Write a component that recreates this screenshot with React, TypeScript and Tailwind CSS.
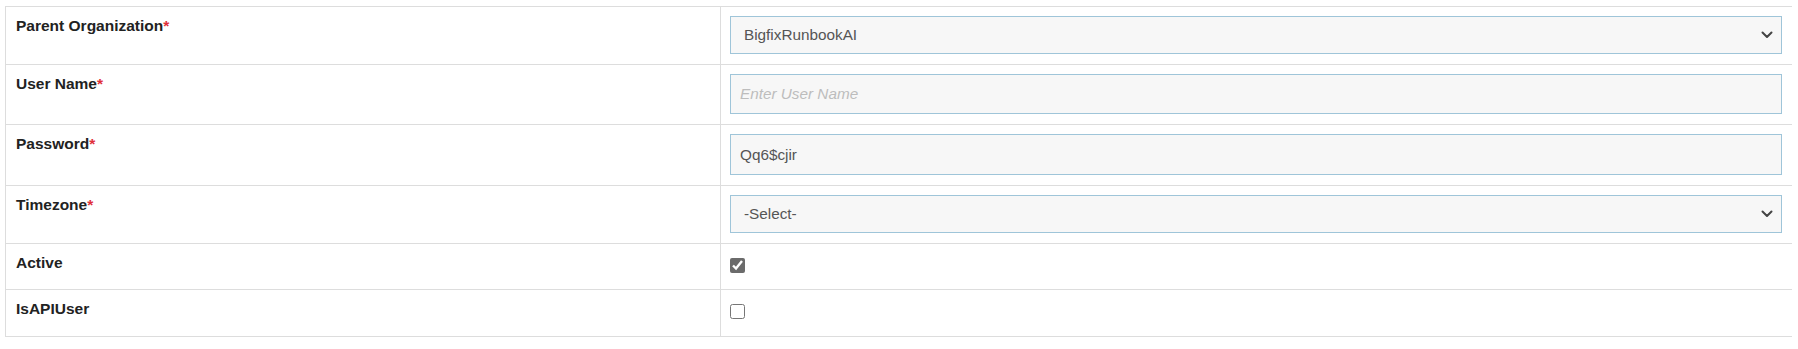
import React from 'react';

const font = { fontFamily: '"Liberation Sans", Arial, sans-serif' };

function Label({ text, required }: { text: string; required?: boolean }) {
  return (
    <div className="w-[715px] shrink-0 border-r border-[#dddddd] pl-[10px] pt-[10px] text-[15.5px] font-bold leading-[18px] text-[#222222]">
      {text}
      {required && <span className="text-[#e0303a]">*</span>}
    </div>
  );
}

function Chevron() {
  return (
    <svg className="pointer-events-none absolute right-[9px] top-1/2 -translate-y-1/2" width="12" height="8" viewBox="0 0 12 8" fill="none">
      <path d="M1.5 1.5 6 6l4.5-4.5" stroke="#444" strokeWidth="2" strokeLinecap="round" strokeLinejoin="round" />
    </svg>
  );
}

function SelectBox({ value }: { value: string }) {
  return (
    <div className="relative">
      <select
        defaultValue={value}
        className="block h-[38px] w-full appearance-none border border-[#9fc5d9] bg-[#f7f7f7] pl-[13px] pr-8 text-[15.3px] text-[#555555] outline-none"
        style={font}
      >
        <option>{value}</option>
      </select>
      <Chevron />
    </div>
  );
}

export default function App() {
  return (
    <div className="bg-white pl-[5px] pr-[6px] pt-[6px]" style={font}>
      <div className="border-l border-t border-[#dddddd]">
        <div className="flex border-b border-[#dddddd]">
          <Label text="Parent Organization" required />
          <div className="flex-1 pb-[10px] pl-[9px] pr-[10px] pt-[9px]">
            <SelectBox value="BigfixRunbookAI" />
          </div>
        </div>

        <div className="flex border-b border-[#dddddd]">
          <Label text="User Name" required />
          <div className="flex-1 pb-[10px] pl-[9px] pr-[10px] pt-[9px]">
            <input
              type="text"
              placeholder="Enter User Name"
              className="block h-[40px] w-full border border-[#9fc5d9] bg-[#f7f7f7] px-[9px] text-[15.3px] text-[#555555] outline-none placeholder:italic placeholder:text-[#bdbdbd]"
              style={font}
            />
          </div>
        </div>

        <div className="flex border-b border-[#dddddd]">
          <Label text="Password" required />
          <div className="flex-1 pb-[10px] pl-[9px] pr-[10px] pt-[9px]">
            <input
              type="text"
              defaultValue="Qq6$cjir"
              className="block h-[41px] w-full border border-[#9fc5d9] bg-[#f7f7f7] px-[9px] text-[15.3px] text-[#555555] outline-none"
              style={font}
            />
          </div>
        </div>

        <div className="flex border-b border-[#dddddd]">
          <Label text="Timezone" required />
          <div className="flex-1 pb-[10px] pl-[9px] pr-[10px] pt-[9px]">
            <SelectBox value="-Select-" />
          </div>
        </div>

        <div className="flex border-b border-[#dddddd]">
          <Label text="Active" />
          <div className="flex-1 pb-[9px] pl-[9px] pt-[9px]">
            <div className="h-[27px] pt-[5px]">
              <input type="checkbox" defaultChecked className="m-0 block h-[15px] w-[15px] accent-[#6b6b6b]" />
            </div>
          </div>
        </div>

        <div className="flex border-b border-[#dddddd]">
          <Label text="IsAPIUser" />
          <div className="flex-1 pb-[9px] pl-[9px] pt-[9px]">
            <div className="h-[28px] pt-[5px]">
              <input type="checkbox" className="m-0 block h-[15px] w-[15px] accent-[#6b6b6b]" />
            </div>
          </div>
        </div>
      </div>
    </div>
  );
}
